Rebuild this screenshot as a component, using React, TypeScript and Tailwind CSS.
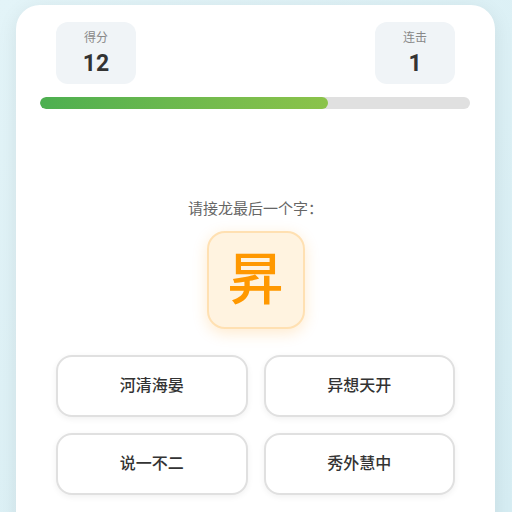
export default function App() {
  const options = ["河清海晏", "异想天开", "说一不二", "秀外慧中"];
  return (
    <div
      className="h-[512px] w-[512px] overflow-hidden bg-gradient-to-br from-[#e3f4f8] to-[#d6edf3] pl-4 pt-[5px]"
      style={{ fontFamily: 'Roboto, "Noto Sans CJK SC", sans-serif' }}
    >
      <div className="h-[540px] w-[479px] rounded-[24px] bg-white px-6 pt-[17px] shadow-[0_4px_20px_rgba(0,0,0,0.08)]">
        <div className="flex justify-between px-4">
          <div className="flex h-[62px] w-[80px] flex-col items-center rounded-xl bg-[#f0f4f7] pt-2">
            <span className="text-[12px] leading-4 text-[#888]">得分</span>
            <span className="mt-1 text-[23px] font-bold leading-7 text-[#333]">12</span>
          </div>
          <div className="flex h-[62px] w-[80px] flex-col items-center rounded-xl bg-[#f0f4f7] pt-2">
            <span className="text-[12px] leading-4 text-[#888]">连击</span>
            <span className="mt-1 text-[23px] font-bold leading-7 text-[#333]">1</span>
          </div>
        </div>

        <div className="mt-[13px] h-3 w-[430px] overflow-hidden rounded-full bg-[#e0e0e0]">
          <div className="h-full w-[67%] rounded-full bg-gradient-to-r from-[#4caf50] to-[#8bc34a]" />
        </div>

        <p className="mt-[90px] text-center text-[15px] leading-5 text-[#666]">请接龙最后一个字：</p>

        <div className="mt-3 flex justify-center">
          <div className="flex h-[98px] w-[98px] items-center justify-center rounded-[18px] border-2 border-[#ffe0b2] bg-[#fff3e0] shadow-[0_4px_15px_rgba(255,152,0,0.2)]">
            <span className="text-[56px] font-medium leading-none text-[#ff9800]">昇</span>
          </div>
        </div>

        <div className="mt-[26px] grid grid-cols-2 gap-4 px-4">
          {options.map((o) => (
            <div
              key={o}
              className="flex h-[62px] items-center justify-center rounded-2xl border-2 border-[#e0e0e0] bg-white text-[16px] font-medium text-[#333] shadow-[0_2px_6px_rgba(0,0,0,0.06)]"
            >
              {o}
            </div>
          ))}
        </div>
      </div>
    </div>
  );
}
